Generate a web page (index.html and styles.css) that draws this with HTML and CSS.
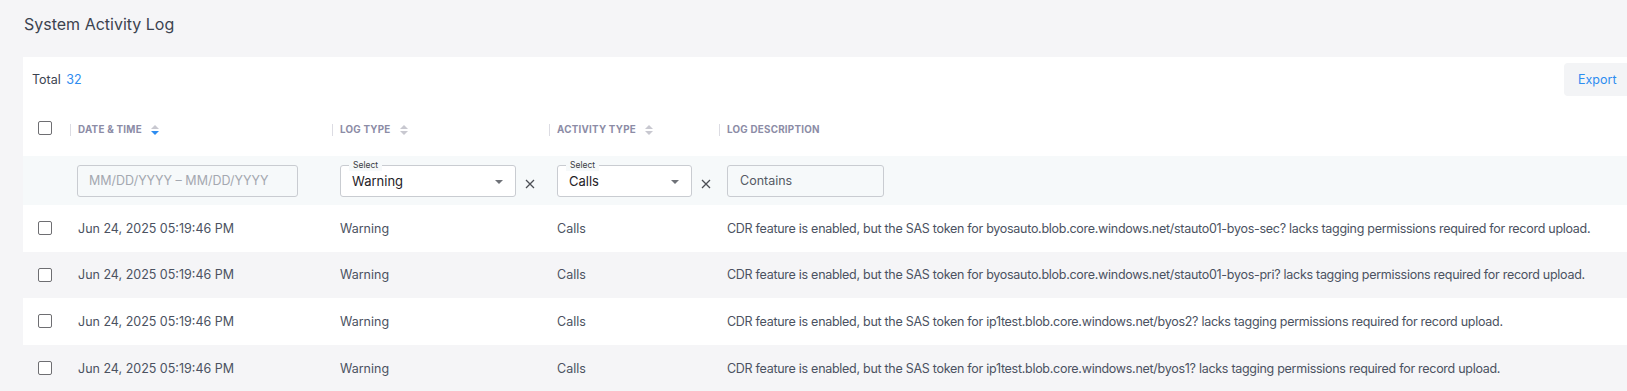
FILE: index.html
```html
<!DOCTYPE html>
<html lang="en">
<head>
    <meta charset="utf-8">
    <title>System Activity Log</title>
    <link rel="stylesheet" href="styles.css">
</head>
<body>
    <main class="log-page">
        <h1 class="log-title">System Activity Log</h1>

        <section class="log-card">
            <div class="log-toolbar">
                <p class="log-total">Total <span class="log-count">32</span></p>
                <button class="export-btn" type="button">Export</button>
            </div>

            <table class="log-table">
                <colgroup>
                    <col class="col-check">
                    <col class="col-date">
                    <col class="col-type">
                    <col class="col-activity">
                    <col>
                </colgroup>
                <thead>
                    <tr class="head-row">
                        <th class="cell-check"><span class="checkbox"></span></th>
                        <th><span class="head-label">Date &amp; Time <i class="sort sort-down"></i></span></th>
                        <th><span class="head-label">Log Type <i class="sort"></i></span></th>
                        <th><span class="head-label">Activity Type <i class="sort"></i></span></th>
                        <th><span class="head-label">Log Description</span></th>
                    </tr>
                    <tr class="filter-row">
                        <td></td>
                        <td><div class="field field-date">MM/DD/YYYY – MM/DD/YYYY</div></td>
                        <td>
                            <div class="filter-group">
                                <div class="field field-select field-type"><span class="field-legend">Select</span>Warning<i class="caret"></i></div>
                                <svg class="clear" width="10" height="10" viewBox="0 0 10 10"><path d="M1 1L9 9M9 1L1 9"/></svg>
                            </div>
                        </td>
                        <td>
                            <div class="filter-group">
                                <div class="field field-select field-activity"><span class="field-legend">Select</span>Calls<i class="caret"></i></div>
                                <svg class="clear" width="10" height="10" viewBox="0 0 10 10"><path d="M1 1L9 9M9 1L1 9"/></svg>
                            </div>
                        </td>
                        <td><div class="field field-text">Contains</div></td>
                    </tr>
                </thead>
                <tbody>
                    <tr>
                        <td class="cell-check"><span class="checkbox"></span></td>
                        <td>Jun 24, 2025 05:19:46 PM</td>
                        <td>Warning</td>
                        <td>Calls</td>
                        <td class="cell-desc">CDR feature is enabled, but the SAS token for byosauto.blob.core.windows.net/stauto01-byos-sec? lacks tagging permissions required for record upload.</td>
                    </tr>
                    <tr>
                        <td class="cell-check"><span class="checkbox"></span></td>
                        <td>Jun 24, 2025 05:19:46 PM</td>
                        <td>Warning</td>
                        <td>Calls</td>
                        <td class="cell-desc">CDR feature is enabled, but the SAS token for byosauto.blob.core.windows.net/stauto01-byos-pri? lacks tagging permissions required for record upload.</td>
                    </tr>
                    <tr>
                        <td class="cell-check"><span class="checkbox"></span></td>
                        <td>Jun 24, 2025 05:19:46 PM</td>
                        <td>Warning</td>
                        <td>Calls</td>
                        <td class="cell-desc">CDR feature is enabled, but the SAS token for ip1test.blob.core.windows.net/byos2? lacks tagging permissions required for record upload.</td>
                    </tr>
                    <tr>
                        <td class="cell-check"><span class="checkbox"></span></td>
                        <td>Jun 24, 2025 05:19:46 PM</td>
                        <td>Warning</td>
                        <td>Calls</td>
                        <td class="cell-desc">CDR feature is enabled, but the SAS token for ip1test.blob.core.windows.net/byos1? lacks tagging permissions required for record upload.</td>
                    </tr>
                </tbody>
            </table>
        </section>
    </main>
</body>
</html>
```

FILE: styles.css
```css
:root {
    --page: #f5f5f7;
    --text: #4b5261;
    --title: #3c4350;
    --head: #8c8ca6;
    --blue: #2d8cf0;
    --border: #c9ccd1;
    --filter: #f6f9fa;
}

* {
    margin: 0;
    padding: 0;
    box-sizing: border-box;
}

body {
    font-family: Inter, 'Noto Sans', sans-serif;
    background: var(--page);
    color: var(--text);
    font-size: 13px;
}

.log-page {
    padding-left: 23px;
}

.log-title {
    font-size: 16px;
    font-weight: 400;
    color: var(--title);
    height: 57px;
    line-height: 48px;
    padding-left: 1px;
}

.log-card {
    background: white;
}

.log-toolbar {
    height: 47px;
    display: flex;
    align-items: flex-start;
    justify-content: space-between;
    padding: 6px 0 0 9px;
}

.log-total {
    color: var(--title);
    line-height: 34px;
    font-size: 12.5px;
}

.log-count {
    color: var(--blue);
    margin-left: 2px;
}

.export-btn {
    font-family: inherit;
    font-size: 12.5px;
    color: var(--blue);
    background: #f3f4f6;
    border: none;
    border-radius: 4px 0 0 4px;
    width: 63px;
    height: 33px;
    text-align: left;
    padding-left: 14px;
}

.log-table {
    width: 100%;
    border-collapse: collapse;
    table-layout: fixed;
}

.col-check { width: 47px; }
.col-date { width: 262px; }
.col-type { width: 217px; }
.col-activity { width: 170px; }

.log-table td,
.log-table th {
    padding: 0 0 0 8px;
    text-align: left;
    vertical-align: middle;
    white-space: nowrap;
}

.log-table .cell-check {
    padding-left: 15px;
}

.checkbox {
    display: block;
    width: 14px;
    height: 14px;
    border: 1.5px solid #6e6e72;
    border-radius: 2px;
    background: white;
}

.head-row {
    height: 52px;
}

.head-row th {
    padding: 0 0 4px 0;
}

.head-row .cell-check {
    padding-left: 15px;
}

.head-label {
    display: inline-flex;
    align-items: center;
    gap: 9px;
    height: 12px;
    border-left: 1px solid #dcdce3;
    padding-left: 7px;
    font-size: 9.8px;
    font-weight: 700;
    letter-spacing: 0.25px;
    text-transform: uppercase;
    color: var(--head);
}

.sort {
    display: inline-flex;
    flex-direction: column;
    gap: 2px;
}

.sort::before,
.sort::after {
    content: '';
    border-left: 4px solid transparent;
    border-right: 4px solid transparent;
}

.sort::before {
    border-bottom: 4px solid #c8c8d0;
}

.sort::after {
    border-top: 4px solid #c8c8d0;
}

.sort-down::after {
    border-top-color: var(--blue);
}

.filter-row {
    height: 49px;
    background: var(--filter);
}

.filter-row td {
    padding-left: 8px;
}

.filter-row td:nth-child(2) {
    padding-left: 7px;
}

.filter-group {
    display: flex;
    align-items: center;
    gap: 9px;
}

.field {
    position: relative;
    height: 32px;
    border: 1px solid var(--border);
    border-radius: 3px;
    background: var(--filter);
    display: flex;
    align-items: center;
    padding-left: 11px;
    font-size: 12.5px;
}

.field-date {
    width: 221px;
    color: #a4a8b0;
}

.field-text {
    width: 157px;
    color: #555a64;
    padding-left: 12px;
}

.field-select {
    background: white;
    color: #1f2227;
    font-size: 13px;
}

.field-type { width: 176px; }
.field-activity { width: 135px; }

.field-legend {
    position: absolute;
    top: -7px;
    left: 8px;
    padding: 0 4px;
    font-size: 8.5px;
    line-height: 12px;
    color: #3a3d44;
    background: var(--filter);
}

.caret {
    position: absolute;
    right: 12px;
    top: 14px;
    border-left: 4px solid transparent;
    border-right: 4px solid transparent;
    border-top: 4px solid #6f7278;
}

.clear {
    margin-top: 7px;
    fill: none;
    stroke: #4c4f55;
    stroke-width: 1.3;
}

tbody tr {
    height: 46.6px;
}

tbody tr:nth-child(even) {
    background: var(--page);
}

tbody td {
    font-size: 12.5px;
    color: var(--text);
}

.log-table .cell-desc {
    letter-spacing: -0.28px;
}
```
